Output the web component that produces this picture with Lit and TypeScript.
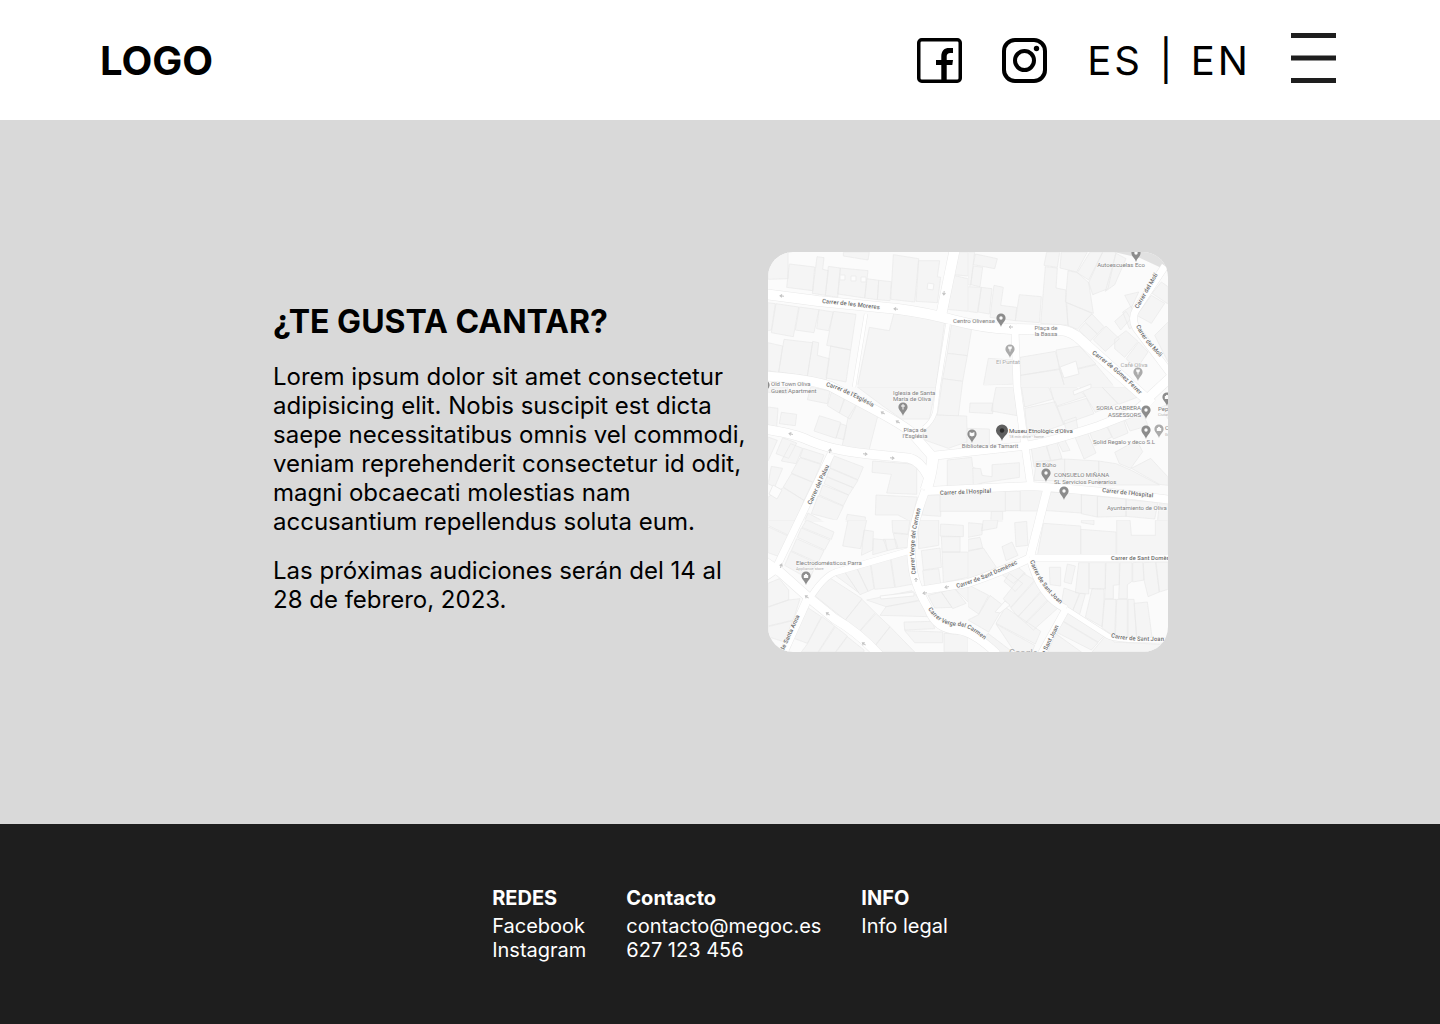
import { LitElement, html, svg, css } from "lit";
import { customElement } from "lit/decorators.js";

interface Tile {
  x: number;
  y: number;
  shapes: string[];
}

interface Label {
  x: number;
  y: number;
  text: string;
  tone?: string;
  anchor?: string;
}

/* City blocks, grouped by map tile. Each tile is 600x405 units at a third of the map scale. */
const TILES: Tile[] = [
  {
    x: 0,
    y: 0,
    shapes: [
      "M0 0H60V80L0 82Z",
      "M64 36L140 45L134 116L56 106Z",
      "M147 14L168 17L164 52L181 56L172 130L133 124Z",
      "M181 43L217 48L209 136L172 130Z",
      "M217 48L300 56L290 138L209 126Z",
      "M226 0H304L300 24L226 12Z",
      "M296 80L332 85L328 143L290 138Z",
      "M332 85L370 89L366 146L328 143Z",
      "M376 8L452 20L440 150L368 142Z",
      "M452 26L515 26L508 74L518 76L508 152L444 148Z",
      "M570 0H600V72L556 68Z",
      "M556 70L600 80V178L538 172Z",
      "M0 152L22 155L10 234L0 236Z",
      "M24 155L92 165L76 254L10 242Z",
      "M94 165L153 173L138 242L82 234Z",
      "M153 173L196 180L182 236L146 230Z",
      "M196 178L264 187L248 294L176 280Z",
      "M0 272L44 282L32 362L0 356Z",
      "M48 262L134 272L118 372L32 360Z",
      "M134 268L152 272L148 310L184 320L174 388L118 372Z",
      "M188 282L248 294L234 390L174 378Z",
      "M378 182L530 208L504 405H268L304 226L364 236Z",
    ],
  },
  {
    x: 200,
    y: 0,
    shapes: [
      "M0 0H20L8 100L0 98Z",
      "M22 6L88 20L80 50L16 38Z",
      "M16 42L44 46L36 104L8 98Z",
      "M0 104L40 106L28 182L0 178Z",
      "M40 106L72 110L64 186L30 180Z",
      "M78 100L106 106L98 160L146 166L142 206L66 196Z",
      "M154 128L220 134L214 212L142 206Z",
      "M236 0H275L268 46L228 40Z",
      "M232 44L268 48L264 108L294 114V150L300 220L218 214Z",
      "M280 0H358L326 60L276 48Z",
      "M300 56L328 62L362 92L376 184L292 150Z",
      "M296 152L372 184L328 232L300 220Z",
      "M366 0H404L362 84L328 62Z",
      "M404 0H444L420 110L374 128L362 92Z",
      "M444 4L474 20L440 98L412 118Z",
      "M372 186L408 224L388 246L350 208Z",
      "M352 212L388 246L366 268L332 234Z",
      "M414 222L454 260L412 298L376 264Z",
      "M440 208L474 178L488 200L458 234Z",
      "M464 180L490 162L500 224L484 230Z",
      "M440 262L474 236L510 268L470 316L440 290Z",
      "M580 90L600 104V156L552 124Z",
      "M550 130L590 154L550 214L506 190Z",
      "M470 130L512 120L490 168Z",
      "M512 270L540 300L506 350L474 320Z",
      "M61 319L136 324L148 396L46 401Z",
      "M156 316L262 298L276 350L156 370Z",
      "M264 294L334 282L384 336L276 362Z",
      "M158 370L276 352L290 405H158Z",
      "M278 364L384 338L440 405H290Z",
      "M560 250L600 210V330Z",
    ],
  },
  {
    x: 0,
    y: 135,
    shapes: [
      "M0 0H60L58 20L0 16Z",
      "M40 76L86 82L82 116L34 110Z",
      "M0 60L30 64L26 120L0 114Z",
      "M128 0L186 12L178 50L118 38Z",
      "M190 16L230 30L214 78L178 56Z",
      "M232 32L268 50L246 96L214 78Z",
      "M154 86L218 106L204 154L138 132Z",
      "M218 110L236 116L228 158L204 152Z",
      "M264 54L330 84L302 194L222 178L240 92Z",
      "M268 0H504L484 96L400 96L346 58Z",
      "M0 150L28 160L0 222Z",
      "M44 152L86 168L62 214L24 200Z",
      "M68 170L104 184L84 230L40 222Z",
      "M106 184L168 204L158 230L96 210Z",
      "M96 212L158 232L136 286L70 258Z",
      "M70 260L134 286L108 340L46 300Z",
      "M46 302L108 340L84 405H0V330Z",
      "M10 238L44 244L20 300L0 290Z",
      "M196 206L286 240L270 278L186 242Z",
      "M186 244L270 280L256 302L176 268Z",
      "M176 270L256 302L242 324L168 290Z",
      "M164 294L242 324L226 356L154 324Z",
      "M150 326L226 358L206 400L130 380Z",
      "M120 378L170 405H108Z",
      "M314 222L446 232V322L356 318L370 262L312 256Z",
      "M324 324L448 330L430 405L390 384H322Z",
      "M238 382L292 390V405H232Z",
      "M474 324H518V388L462 384Z",
    ],
  },
  {
    x: 200,
    y: 135,
    shapes: [
      "M84 0H138L148 86L70 72Z",
      "M6 48H74V80L4 76Z",
      "M160 0H242L256 36L170 60Z",
      "M246 0H324L354 28L264 58L256 36Z",
      "M266 60L356 34L378 80L286 112Z",
      "M170 64L262 44L288 112L180 150Z",
      "M336 0H402L450 50L382 76Z",
      "M402 0H470L510 30L452 52Z",
      "M580 60L600 52V96Z",
      "M288 102L324 90L330 130L296 140Z",
      "M320 148L356 132L384 198L348 216Z",
      "M360 124L408 102L432 150L380 176Z",
      "M410 102L462 84L480 138L436 156Z",
      "M464 84L520 66L540 116L486 132Z",
      "M190 186L232 168L248 222L198 240Z",
      "M236 178L266 164L282 214L250 222Z",
      "M268 162L288 154L306 190L284 194Z",
      "M440 196L506 160L524 194L488 244L454 230Z",
      "M490 244L548 214L600 270V295L574 292Z",
      "M204 224L290 216V282L198 280Z",
      "M290 216L392 222V290L290 284Z",
      "M392 222L444 230L490 250L574 294H392Z",
      "M156 308H228L212 372H156Z",
      "M244 316H340V378L226 370Z",
      "M340 324L388 326V390L340 380Z",
      "M388 328L474 336V388L388 390Z",
      "M474 338L570 346L560 396L474 388Z",
      "M574 350H600V405H568Z",
      "M70 372H104V405H68Z",
    ],
  },
  {
    x: 0,
    y: 268,
    shapes: [
      "M0 0H84L62 46L0 16Z",
      "M0 20L60 48L34 110L0 98Z",
      "M116 0L198 36L190 58L102 22Z",
      "M100 24L186 60L170 90L88 52Z",
      "M86 56L168 92L150 128L70 92Z",
      "M68 94L146 130L124 178L50 136Z",
      "M240 0H296L278 86L224 78Z",
      "M288 30L316 34L314 90L280 106Z",
      "M316 56L352 60L358 92L314 104Z",
      "M346 58L382 58L390 84L358 92Z",
      "M372 0H426L420 42L374 38Z",
      "M376 40L424 44L418 82L386 86Z",
      "M196 162L226 150L272 218L240 194Z",
      "M226 150L264 138L300 214L276 224Z",
      "M264 140L306 128L318 206L300 214Z",
      "M308 126L366 112L380 202L320 208Z",
      "M368 110L426 98L436 192L382 202Z",
      "M296 240L432 212L456 240L354 260Z",
      "M180 170L282 236L232 300L142 228Z",
      "M282 238L322 278L272 336L232 300Z",
      "M324 280L366 320L318 380L272 338Z",
      "M366 320L440 396H330L320 380Z",
      "M408 306L494 304L500 326L410 330Z",
      "M410 332L524 336V368H440Z",
      "M354 260L456 242L482 290L336 286Z",
      "M528 340L600 344V396H528Z",
      "M464 152L512 146L518 192L470 200Z",
      "M460 92L516 84L520 142L466 150Z",
      "M520 50H576V96H522Z",
      "M518 12L586 16V50L516 48Z",
      "M450 0H512V76L452 86Z",
      "M522 96H600V172L526 188Z",
      "M480 226L520 216L552 262L500 264Z",
      "M520 216L560 206L594 250L554 266Z",
      "M560 206L600 196V246Z",
      "M0 190L34 176L62 210V240L0 260Z",
      "M0 262L60 240L96 236L76 300L0 318Z",
      "M0 320L74 302L50 366L0 350Z",
      "M112 258L160 290L118 370L70 352Z",
      "M162 290L200 318L150 396H100L118 372Z",
      "M202 320L238 348L202 396H152Z",
      "M238 350L288 390V396H204Z",
    ],
  },
  {
    x: 200,
    y: 268,
    shapes: [
      "M0 8L44 12L42 44L0 52Z",
      "M46 0H90L86 24L40 32Z",
      "M0 58L36 52L44 84L0 92Z",
      "M140 8L176 4L180 76L144 80Z",
      "M102 80L132 66L150 106L114 122Z",
      "M0 94L46 84L84 140L60 160L0 180Z",
      "M226 10L338 18V108H208Z",
      "M338 28L444 36V108H338Z",
      "M340 0H378V14L340 8Z",
      "M446 0H486L490 46H562V0H600V106H446Z",
      "M244 142H278V198L246 194Z",
      "M298 132L322 138L310 192L288 186Z",
      "M332 128H362V222L322 218Z",
      "M364 128H412V206H364Z",
      "M414 128H454V194L436 196V236H410Z",
      "M456 128H492V184L478 194V236H452Z",
      "M494 128L524 126L528 180L494 186Z",
      "M526 128L562 126L574 216L540 230L528 180Z",
      "M564 126H600V208L574 216Z",
      "M288 204L334 220L314 272L280 250Z",
      "M336 220L352 222L334 286L314 272Z",
      "M372 206L408 208V240L402 320L352 292Z",
      "M410 238L444 238L440 350L402 324Z",
      "M446 238L478 238V354L442 350Z",
      "M480 238H498L506 354H480Z",
      "M498 250L538 246L552 352L506 354Z",
      "M0 194L62 226L32 282L0 260Z",
      "M66 226L108 258L62 336L0 300L32 284Z",
      "M124 160L164 190L142 214L108 184Z",
      "M94 158L136 130L172 160L136 190Z",
      "M166 160L200 180L128 262L106 236Z",
      "M202 182L222 210L150 290L128 264Z",
      "M224 212L244 234L172 308L150 290Z",
      "M246 236L272 262L196 330L174 310Z",
      "M112 262L218 334L202 372L84 310Z",
      "M84 312L200 376L192 396H140Z",
      "M60 340L134 396H90L48 354Z",
      "M300 274L412 344L390 366L280 300Z",
      "M280 302L390 368L370 390L264 336Z",
      "M262 340L340 396H240Z",
      "M414 346L440 366L600 374V396H372Z",
    ],
  },
];

/* Blocks that straddle several tiles, in the same units from their own origin. */
const CENTRE: Tile = {
  x: 152,
  y: 58,
  shapes: [
    "M95 40L156 50L142 137L82 130Z",
    "M82 130L142 137L128 214L68 206Z",
    "M68 206L128 214L115 318L52 315Z",
    "M45 315L140 318L142 395L85 415L0 385Z",
    "M142 355L208 357V412L140 418Z",
    "M82 450L155 442L158 470L185 490V525L82 530Z",
    "M158 474L182 476L186 496L216 500V464L298 458V502L190 518L160 526Z",
    "M60 545L256 543V604H60Z",
    "M256 543H300V602H256Z",
  ],
};

/* Small courtyards left open inside the blocks. */
const COURTS = [
  "M72 23h5v5h-5zM83 24h5v5h-5zM93 25h5v5h-5zM160 31l6 1l-1 6l-6-1z",
  "M292 115l16-6l3 13l-15 4z",
  "M5 233l9 5l-5 9l-8-5z",
  "M305 139l18-7v4l-17 7z",
  "M232 361l10-8l-5-4l-10 11z",
  "M112 344l34-4v4l-33 3z",
];

const ROADS: [number, string][] = [
  [3, "M98 62L86 135"],
  [4, "M180 72L170 135L167 160Q164 170 156 176"],
  [10, "M187 -4L173 64"],
  [10, "M-4 42L50 49L130 57Q160 61 185 68Q215 76 243 77L292 78Q304 79 313 88L384 152"],
  [7, "M247 78L249 135L255 180L263 236"],
  [8, "M384 145L366 160L330 174Q275 192 255 194L163 204"],
  [9, "M376 150L404 124"],
  [7, "M397 14L368 58Q363 66 368 76L404 124"],
  [9, "M-4 124Q40 127 62 134L107 158Q135 173 143 180L164 204"],
  [9, "M-4 177Q28 182 40 188Q62 198 100 202L140 206Q152 208 161 226"],
  [11, "M165 203Q164 220 158 238"],
  [8, "M157 239Q140 285 144 310Q145 330 160 356Q168 378 190 378Q206 380 229 402"],
  [8, "M157 239L262 234Q325 238 404 248"],
  [7, "M63 202L8 316"],
  [9, "M-4 309L12 320L40 345L67 367Q90 380 112 404"],
  [10, "M-5 325L8 316"],
  [6, "M42 346Q56 324 68 320L144 298"],
  [8, "M39 348L14 404"],
  [8, "M150 339L200 331Q235 319 262 306"],
  [7, "M262 306H404"],
  [8, "M279 238L262 305"],
  [7, "M262 306Q272 345 298 357"],
  [7, "M298 357L272 404"],
  [5, "M298 357L340 384Q348 389 404 388"],
];

const ARROWS: [number, number, number][] = [
  [14, 44, 185],
  [128, 57, 185],
  [176, 41, 95],
  [243, 75, 180],
  [115, 161, 210],
  [130, 170, 210],
  [23, 182, 195],
  [62, 199, 285],
  [97, 202, 5],
  [124, 206, 5],
  [13, 314, 290],
  [39, 345, 215],
  [60, 362, 215],
  [96, 392, 215],
  [148, 328, 270],
  [157, 341, 170],
  [179, 335, 165],
];

const LABELS: Label[] = [
  { x: 353, y: 15, text: "Autoescuelas Eco", anchor: "middle" },
  { x: 185, y: 71, text: "Centro Olivense" },
  { x: 278, y: 78, text: "Plaça de", anchor: "middle" },
  { x: 278, y: 84, text: "la Bassa", anchor: "middle" },
  { x: 240, y: 112, text: "El Puntat", tone: "faint", anchor: "middle" },
  { x: 366, y: 115, text: "Café Oliva", tone: "faint", anchor: "middle" },
  { x: 3, y: 134, text: "Old Town Oliva" },
  { x: 3, y: 141, text: "Guest Apartment" },
  { x: 125, y: 143, text: "Iglesia de Santa" },
  { x: 125, y: 149, text: "María de Oliva" },
  { x: 147, y: 180, text: "Plaça de", anchor: "middle" },
  { x: 147, y: 186, text: "l'Església", anchor: "middle" },
  { x: 373, y: 158, text: "SORIA CABRERA", anchor: "end" },
  { x: 373, y: 165, text: "ASSESSORS", anchor: "end" },
  { x: 390, y: 159, text: "Pepe" },
  { x: 390, y: 164, text: "Ciutat", tone: "tiny" },
  { x: 397, y: 178, text: "C" },
  { x: 397, y: 184, text: "Ge", tone: "tiny" },
  { x: 241, y: 181, text: "Museu Etnològic d'Oliva", tone: "strong" },
  { x: 241, y: 186, text: "18 min drive - home", tone: "tiny" },
  { x: 222, y: 196, text: "Biblioteca de Tamarit", anchor: "middle" },
  { x: 356, y: 192, text: "Solid Regalo y deco S.L", anchor: "middle" },
  { x: 278, y: 215, text: "El Búho", anchor: "middle" },
  { x: 286, y: 225, text: "CONSUELO MIÑANA" },
  { x: 286, y: 232, text: "SL Servicios Funerarios" },
  { x: 339, y: 258, text: "Ayuntamiento de Oliva" },
  { x: 28, y: 313, text: "Electrodomésticos Parra" },
  { x: 28, y: 318, text: "Appliance store", tone: "tiny" },
];

const STREETS: [string, string][] = [
  ["M54 51Q87 54 132 60", "Carrer de les Moreres"],
  ["M58 134Q82 141 120 164", "Carrer de l'Església"],
  ["M43 253L66 204", "Carrer del Palau"],
  ["M148 322Q142 289 156 246", "Carrer Verge del Carmen"],
  ["M172 243L240 240", "Carrer de l'Hospital"],
  ["M334 240L400 247", "Carrer de l'Hospital"],
  ["M324 102Q346 116 384 155", "Carrer de Gómez Ferrer"],
  ["M370 57L396 12", "Carrer del Molí"],
  ["M368 74Q376 92 400 112", "Carrer del Molí"],
  ["M189 336Q226 325 264 304", "Carrer de Sant Domènec"],
  ["M343 308H420", "Carrer de Sant Domènec"],
  ["M262 309Q272 339 304 361", "Carrer de Sant Joan"],
  ["M343 385Q362 391 420 388", "Carrer de Sant Joan"],
  ["M267 422L296 364", "Carrer de Sant Joan"],
  ["M160 357Q171 374 191 374Q206 376 227 398", "Carrer Verge del Carmen"],
  ["M8 416L38 350", "Carrer de Santa Anna"],
];

const DOT = "M-1.7 -7A1.7 1.7 0 0 1 1.7 -7A1.7 1.7 0 0 1 -1.7 -7Z";
const CROSS = "M-0.5 -10H0.5V-8.5H2V-7.5H0.5V-4.5H-0.5V-7.5H-2V-8.5H-0.5Z";
const GLASS = "M-2 -9.5H2L1.5 -7L0.5 -6.5V-4.5H-0.5V-6.5L-1.5 -7Z";
const BAG = "M-2.2 -5V-8H-1.2A1.2 1.2 0 0 1 1.2 -8H2.2V-5Z";
const BOOK = "M-2.4 -9L0 -8L2.4 -9V-5.500L0 -4.500L-2.4 -5.500Z";

const PINS: [number, number, string, string][] = [
  [368, 8, "pin", DOT],
  [233, 73, "pin", DOT],
  [242, 104, "pin pale", GLASS],
  [370, 127, "pin pale", GLASS],
  [135, 162, "pin", CROSS],
  [204, 189, "pin", BOOK],
  [378, 165, "pin", DOT],
  [378, 185, "pin", DOT],
  [391, 184, "pin pale", BAG],
  [399, 152, "pin", BAG],
  [278, 228, "pin", DOT],
  [296, 246, "pin", DOT],
  [-3, 140, "pin", DOT],
  [38, 331, "pin", BAG],
];

@customElement("street-map")
export class StreetMap extends LitElement {
  static styles = css`
    :host {
      display: block;
      overflow: hidden;
      border-radius: 25px;
      background: #fbfbfb;
    }
    .map {
      display: block;
      width: 100%;
      height: auto;
      font-family: Roboto, "Liberation Sans", sans-serif;
      font-size: 6px;
    }
    .block {
      fill: #f5f5f5;
    }
    .outline {
      fill: none;
      stroke: #e8e8e8;
      stroke-width: 2;
    }
    .court {
      fill: #fcfcfc;
      stroke: #ededed;
      stroke-width: 1;
    }
    .sea {
      fill: #e1e1e1;
    }
    .casing,
    .road {
      fill: none;
      stroke-linejoin: round;
    }
    .casing {
      stroke: #e9e9e9;
    }
    .road {
      stroke: #ffffff;
    }
    .arrow {
      fill: none;
      stroke: #c4c4c4;
      stroke-width: 1;
    }
    .halo {
      paint-order: stroke;
      stroke: #fbfbfb;
      stroke-width: 1;
      fill: #808080;
    }
    .street {
      font-weight: 500;
      fill: #6a6a6a;
    }
    .faint {
      fill: #ababab;
    }
    .strong {
      fill: #555555;
    }
    .tiny {
      font-size: 4px;
      fill: #b0b0b0;
    }
    .brand {
      font-size: 9px;
      fill: #a8a8a8;
    }
    .pin {
      fill: #8c8c8c;
    }
    .pale {
      fill: #ababab;
    }
    .hole {
      fill: #fbfbfb;
    }
    .here {
      fill: #5f5f5f;
    }
    .core {
      fill: #2b2b2b;
    }
  `;

  render() {
    return html`
      <svg class="map" viewBox="0 0 400 400" role="img" aria-label="Mapa de Oliva">
        <defs>
          <clipPath id="tile-edge"><rect x="1" y="1" width="598" height="397" /></clipPath>
          ${STREETS.map(([d], i) => svg`<path id=${"street-" + i} d=${d} />`)}
        </defs>
        ${TILES.map(
          (t) => svg`<g transform="translate(${t.x} ${t.y}) scale(0.3334)">
            ${t.shapes.map((d) => svg`<path class="block" d=${d} />`)}
          </g>`
        )}
        ${TILES.map(
          (t) => svg`<g transform="translate(${t.x} ${t.y}) scale(0.3334)" clip-path="url(#tile-edge)">
            ${t.shapes.map((d) => svg`<path class="outline" d=${d} />`)}
          </g>`
        )}
        <g transform="translate(${CENTRE.x} ${CENTRE.y}) scale(0.3334)">
          ${CENTRE.shapes.map((d) => svg`<path class="block" d=${d} /><path class="outline" d=${d} />`)}
        </g>
        ${COURTS.map((d) => svg`<path class="court" d=${d} />`)}
        <path class="sea" d="M346 0L372 6L400 19V0Z" />
        ${ROADS.map(([w, d]) => svg`<path class="casing" stroke-width=${w + 1} d=${d} />`)}
        ${ROADS.map(([w, d]) => svg`<path class="road" stroke-width=${w} d=${d} />`)}
        ${ARROWS.map(
          ([x, y, r]) =>
            svg`<path class="arrow" transform="translate(${x} ${y}) rotate(${r})" d="M-2 0H2M0 -1.5L2 0L0 1.5" />`
        )}
        ${STREETS.map(
          ([, text], i) =>
            svg`<text class="halo street"><textPath href=${"#street-" + i}>${text}</textPath></text>`
        )}
        ${LABELS.map(
          (l) =>
            svg`<text class="halo ${l.tone ?? ""}" x=${l.x} y=${l.y} text-anchor=${l.anchor ?? "start"}>${l.text}</text>`
        )}
        <text class="brand" x="241" y="404">Google</text>
        ${PINS.map(
          ([x, y, tone, glyph]) => svg`<g transform="translate(${x} ${y})">
            <path class=${tone} d="M0 2C-1 -2 -4.6 -3.6 -4.6 -7A4.6 4.6 0 0 1 4.6 -7C4.6 -3.6 1 -2 0 2Z" />
            <path class="hole" d=${glyph} />
          </g>`
        )}
        <path class="here" d="M234 189C233 184 228 183 228 178.500A6 6 0 0 1 240 178.500C240 183 235 184 234 189Z" />
        <circle class="core" cx="234" cy="178.500" r="2.200" />
      </svg>
    `;
  }
}

@customElement("app-root")
export class AppRoot extends LitElement {
  static styles = css`
    :host {
      display: flex;
      flex-direction: column;
      min-height: 100vh;
      font-family: Inter, "Liberation Sans", sans-serif;
      color: #000000;
      background: #d9d9d9;
    }
    a {
      color: inherit;
      text-decoration: none;
    }
    .header {
      display: flex;
      justify-content: space-between;
      align-items: flex-end;
      padding: 33px 104px 37px 100px;
      background: #ffffff;
    }
    .logo {
      font-size: 40px;
      line-height: 45px;
      font-weight: 700;
    }
    .nav {
      display: flex;
      align-items: flex-end;
      gap: 40px;
    }
    .icon {
      display: block;
      width: 45px;
      height: 45px;
    }
    .languages {
      font-size: 40px;
      line-height: 45px;
      letter-spacing: 3px;
      font-weight: 400;
      white-space: nowrap;
    }
    .divider {
      padding: 0 1px 0 2px;
    }
    .menu {
      padding: 0;
      border: 0;
      background: none;
      cursor: pointer;
    }
    .bars {
      display: block;
      width: 45px;
      height: 50px;
      fill: #1e1e1e;
    }
    .main {
      flex: 1;
      display: flex;
      justify-content: center;
      align-items: flex-start;
      gap: 20px;
      padding: 132px 24px;
    }
    .copy {
      box-sizing: border-box;
      flex: 0 1 476px;
      padding: 50px 0 0 1px;
    }
    .title {
      margin: 0 0 21px;
      font-size: 32px;
      line-height: 39px;
      font-weight: 700;
    }
    .text {
      margin: 0 0 20px;
      font-size: 24px;
      line-height: 29px;
      font-weight: 400;
    }
    .place {
      flex: 0 1 400px;
    }
    .footer {
      display: flex;
      justify-content: center;
      gap: 40px;
      padding: 62px 24px;
      color: #ffffff;
      background: #1e1e1e;
      font-size: 20px;
      line-height: 24px;
    }
    .heading {
      margin: 0 0 4px;
      font-size: 20px;
      line-height: 24px;
      font-weight: 700;
    }
    .list {
      margin: 0;
      padding: 0;
      list-style: none;
    }
  `;

  render() {
    return html`
      <header class="header">
        <a class="logo" href="#">LOGO</a>
        <nav class="nav">
          <a href="#facebook" aria-label="Facebook">
            <svg class="icon" viewBox="0 0 45 45">
              <rect x="1.750" y="1.750" width="41.500" height="41.500" rx="3" fill="none" stroke="#000" stroke-width="3.500" />
              <path d="M24.300 44V27H19V22H24.300V18.500C24.300 12.500 27.500 10 32 10H36V15H33.500C30.800 15 29.700 16.500 29.700 18.500V22H36L35.300 27H29.700V44Z" />
            </svg>
          </a>
          <a href="#instagram" aria-label="Instagram">
            <svg class="icon" viewBox="0 0 45 45" fill="none" stroke="#000" stroke-width="4">
              <rect x="2" y="2" width="41" height="41" rx="11" />
              <circle cx="22.500" cy="22.500" r="9.500" />
              <circle cx="34.500" cy="10.500" r="2.700" fill="#000" stroke="none" />
            </svg>
          </a>
          <span class="languages"><a href="#es">ES</a> <span class="divider">|</span> <a href="#en">EN</a></span>
          <button class="menu" type="button" aria-label="Menú">
            <svg class="bars" viewBox="0 0 45 50">
              <rect width="45" height="5" />
              <rect y="22.500" width="45" height="5" />
              <rect y="45" width="45" height="5" />
            </svg>
          </button>
        </nav>
      </header>
      <main class="main">
        <section class="copy">
          <h1 class="title">¿TE GUSTA CANTAR?</h1>
          <p class="text">
            Lorem ipsum dolor sit amet consectetur adipisicing elit. Nobis suscipit est dicta saepe
            necessitatibus omnis vel commodi, veniam reprehenderit consectetur id odit, magni obcaecati
            molestias nam accusantium repellendus soluta eum.
          </p>
          <p class="text">Las próximas audiciones serán del 14 al 28 de febrero, 2023.</p>
        </section>
        <street-map class="place"></street-map>
      </main>
      <footer class="footer">
        <section>
          <h2 class="heading">REDES</h2>
          <ul class="list">
            <li><a href="#facebook">Facebook</a></li>
            <li><a href="#instagram">Instagram</a></li>
          </ul>
        </section>
        <section>
          <h2 class="heading">Contacto</h2>
          <ul class="list">
            <li><a href="mailto:contacto@megoc.es">contacto@megoc.es</a></li>
            <li><a href="tel:627123456">627 123 456</a></li>
          </ul>
        </section>
        <section>
          <h2 class="heading">INFO</h2>
          <ul class="list">
            <li><a href="#legal">Info legal</a></li>
          </ul>
        </section>
      </footer>
    `;
  }
}
